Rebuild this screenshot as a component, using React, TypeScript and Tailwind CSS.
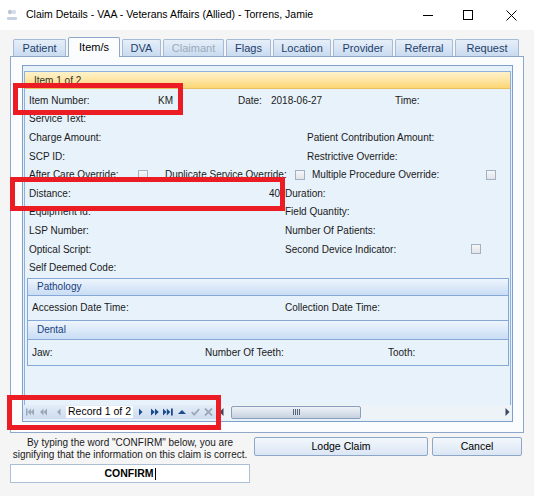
import React from 'react';

const font = { fontFamily: '"Liberation Sans", Arial, sans-serif' };

function Check() {
  return (
    <span className="inline-block w-[10px] h-[10px] shrink-0 border border-[#a3b1c2] bg-linear-to-b from-[#f6f6f6] to-[#e1e4e8]" />
  );
}

function Tab({ label, w, active, disabled }: { label: string; w: string; active?: boolean; disabled?: boolean }) {
  if (active) {
    return (
      <div className={`${w} h-[20px] -mb-px relative z-10 flex items-center justify-center border border-b-0 border-[#8fa8c9] rounded-t-[2px] bg-[#fafcfe] text-[11px] text-black`}>
        {label}
      </div>
    );
  }
  return (
    <div
      className={`${w} h-[17px] flex items-center justify-center border border-b-0 border-[#a4bad6] rounded-t-[2px] bg-linear-to-b from-[#e6eff9] to-[#c9dbf0] text-[11px] ${disabled ? 'text-[#9aa9bb]' : 'text-[#1f3e6b]'}`}
    >
      {label}
    </div>
  );
}

function Row({ children }: { children: React.ReactNode }) {
  return <div className="h-[18.6px] flex items-center pl-[4px] text-[10px] text-[#1a1a1a] whitespace-nowrap">{children}</div>;
}

function NavIcon({ d, w, on, cls }: { d: string; w: number; on?: boolean; cls?: string }) {
  return (
    <svg width={w} height="8" viewBox={`0 0 ${w} 8`} className={`shrink-0 ${cls ?? ''}`}>
      <path d={d} fill={on ? '#1d4b8f' : '#9ca8b6'} />
    </svg>
  );
}

export default function App() {
  return (
    <div className="relative w-[534px] h-[496px] bg-[#f5f5f5] overflow-hidden flex flex-col" style={font}>
      {/* Title bar */}
      <div className="h-[30px] bg-white flex items-center shrink-0">
        <svg width="12" height="14" viewBox="0 0 12 14" className="ml-[6px] mr-[8px]">
          <circle cx="4" cy="4" r="2.2" fill="#b9c7d9" />
          <circle cx="8" cy="4" r="2.2" fill="#d4dde8" />
          <rect x="1" y="9" width="10" height="3" rx="1" fill="#c6d2e2" />
        </svg>
        <span className="text-[10.5px] text-black">Claim Details - VAA - Veterans Affairs (Allied) - Torrens, Jamie</span>
        <div className="ml-auto flex items-center h-full">
          <div className="w-[40px] h-full flex items-center justify-center">
            <span className="block w-[10px] h-px bg-black" />
          </div>
          <div className="w-[40px] h-full flex items-center justify-center">
            <span className="block w-[10px] h-[10px] border border-black" />
          </div>
          <div className="w-[46px] h-full flex items-center justify-center">
            <svg width="11" height="11" viewBox="0 0 11 11">
              <path d="M0.5 0.5 L10.5 10.5 M10.5 0.5 L0.5 10.5" stroke="#000" strokeWidth="1" />
            </svg>
          </div>
        </div>
      </div>

      <div className="px-[10px] flex flex-col">
        {/* Tabs */}
        <div className="h-[26px] flex items-end gap-[2px] pl-[3px]">
          <Tab label="Patient" w="w-[53px]" />
          <Tab label="Item/s" w="w-[52px]" active />
          <Tab label="DVA" w="w-[39px]" />
          <Tab label="Claimant" w="w-[61px]" disabled />
          <Tab label="Flags" w="w-[45px]" />
          <Tab label="Location" w="w-[58px]" />
          <Tab label="Provider" w="w-[60px]" />
          <Tab label="Referral" w="w-[58px]" />
          <Tab label="Request" w="w-[64px]" />
        </div>

        {/* Tab page */}
        <div className="h-[377px] border border-[#8fa8c9] bg-[#fafcfe] pt-[8px] pl-[11px] pr-[10px] pb-[10px] flex">
          <div className="flex-1 border border-[#7f9fc8] bg-[#e8f2fb] flex flex-col">
            <div className="flex-1 pt-[5px] pl-px pr-px">
              <div className="border-l border-t border-r border-[#8fb0da] h-full flex flex-col">
                <div className="h-[17px] bg-linear-to-b from-[#fff3cc] to-[#fcd674] border-b border-[#e9c25f] flex items-center pl-[9px] text-[10px] text-[#333]">
                  Item 1 of 2
                </div>
                <div className="pt-[2px]">
                  <Row>
                    <div className="w-[144px] flex justify-between"><span>Item Number:</span><span>KM</span></div>
                    <span className="w-[65px]" />
                    <span className="w-[33px]">Date:</span>
                    <span className="w-[124px]">2018-06-27</span>
                    <span>Time:</span>
                  </Row>
                  <Row><span>Service Text:</span></Row>
                  <Row>
                    <span className="w-[278px]">Charge Amount:</span>
                    <span>Patient Contribution Amount:</span>
                  </Row>
                  <Row>
                    <span className="w-[278px]">SCP ID:</span>
                    <span>Restrictive Override:</span>
                  </Row>
                  <Row>
                    <span className="w-[109px]">After Care Override:</span>
                    <Check />
                    <span className="w-[17px]" />
                    <span className="w-[130px]">Duplicate Service Override:</span>
                    <Check />
                    <span className="w-[7px]" />
                    <span className="w-[174px]">Multiple Procedure Override:</span>
                    <Check />
                  </Row>
                  <Row>
                    <div className="w-[251px] flex justify-between"><span>Distance:</span><span>40</span></div>
                    <span className="w-[5px]" />
                    <span>Duration:</span>
                  </Row>
                  <Row>
                    <span className="w-[256px]">Equipment Id:</span>
                    <span>Field Quantity:</span>
                  </Row>
                  <Row>
                    <span className="w-[256px]">LSP Number:</span>
                    <span>Number Of Patients:</span>
                  </Row>
                  <Row>
                    <span className="w-[256px]">Optical Script:</span>
                    <span className="w-[186px]">Second Device Indicator:</span>
                    <Check />
                  </Row>
                  <Row><span>Self Deemed Code:</span></Row>
                </div>

                {/* Pathology / Dental */}
                <div className="mt-px ml-[2px] mr-px border border-[#86a8d6] text-[10px] text-[#1a1a1a]">
                  <div className="h-[17px] bg-linear-to-b from-[#eef5fd] to-[#c9ddf4] border-b border-[#86a8d6] flex items-center pl-[9px] text-[#20407f]">
                    Pathology
                  </div>
                  <div className="h-[25px] flex items-center pl-[4px] border-b border-[#86a8d6]">
                    <span className="w-[253px]">Accession Date Time:</span>
                    <span>Collection Date Time:</span>
                  </div>
                  <div className="h-[19px] bg-linear-to-b from-[#eef5fd] to-[#c9ddf4] border-b border-[#86a8d6] flex items-center pl-[9px] text-[#20407f]">
                    Dental
                  </div>
                  <div className="h-[25px] flex items-center pl-[4px]">
                    <span className="w-[173px]">Jaw:</span>
                    <span className="w-[183px]">Number Of Teeth:</span>
                    <span>Tooth:</span>
                  </div>
                </div>
              </div>
            </div>

            {/* Navigator + scrollbar */}
            <div className="h-[14px] mb-[2px] flex items-center">
              <div className="w-[193px] h-full shrink-0 bg-linear-to-b from-[#e3edf8] to-[#cddcef] flex items-center pl-[3px]">
                <NavIcon w={8} d="M0 0.5h1.5v7H0z M5 0.5 L1.8 4 L5 7.5z M8 0.5 L4.8 4 L8 7.5z" />
                <NavIcon w={7} cls="ml-[6px]" d="M3.5 0.5 L0 4 L3.5 7.5z M7 0.5 L3.5 4 L7 7.5z" />
                <NavIcon w={4} cls="ml-[10px]" d="M3.5 0.5 L0 4 L3.5 7.5z" />
                <div className="ml-[5px] h-[12px] w-[67px] shrink-0 bg-white flex items-center justify-center text-[10.5px] text-black whitespace-nowrap">
                  Record 1 of 2
                </div>
                <NavIcon w={4} on cls="ml-[6px]" d="M0 0.5 L3.5 4 L0 7.5z" />
                <NavIcon w={8} on cls="ml-[8px]" d="M0 0.5 L3.8 4 L0 7.5z M4 0.5 L7.8 4 L4 7.5z" />
                <NavIcon w={10} on cls="ml-[4px]" d="M0 0.5 L3.5 4 L0 7.5z M3.8 0.5 L7.3 4 L3.8 7.5z M8 0.5h1.8v7H8z" />
                <NavIcon w={8} on cls="ml-[5px]" d="M0 6 L4 2 L8 6z" />
                <svg width="9" height="8" viewBox="0 0 9 8" className="shrink-0 ml-[5px]">
                  <path d="M0.8 4.2 L3.2 6.6 L8.2 1.2" stroke="#9ca8b6" strokeWidth="1.8" fill="none" />
                </svg>
                <svg width="9" height="8" viewBox="0 0 9 8" className="shrink-0 ml-[4px]">
                  <path d="M1 0.5 L8 7.5 M8 0.5 L1 7.5" stroke="#9ca8b6" strokeWidth="1.8" fill="none" />
                </svg>
              </div>
              <div className="flex-1 h-full flex items-center bg-[#eef3f8]">
                <svg width="5" height="8" viewBox="0 0 5 8" className="ml-[3px] shrink-0">
                  <path d="M4.5 0 L0.5 4 L4.5 8z" fill="#3b4a5e" />
                </svg>
                <div className="ml-[7px] w-[130px] h-[13px] rounded-[2px] border border-[#8a9fbb] bg-linear-to-b from-[#eef2f7] to-[#c7d2e0] flex items-center justify-center gap-px">
                  <span className="w-px h-[6px] bg-[#55657a]" />
                  <span className="w-px h-[6px] bg-[#55657a]" />
                  <span className="w-px h-[6px] bg-[#55657a]" />
                  <span className="w-px h-[6px] bg-[#55657a]" />
                </div>
                <div className="flex-1" />
                <svg width="5" height="8" viewBox="0 0 5 8" className="mr-[2px] shrink-0">
                  <path d="M0.5 0 L4.5 4 L0.5 8z" fill="#3b4a5e" />
                </svg>
              </div>
            </div>
          </div>
        </div>

        {/* Bottom area */}
        <div className="mt-[4px] flex gap-[4px]">
          <div className="w-[240px] flex flex-col">
            <div className="text-[10px] leading-[12px] text-center text-[#1a1a1a]">
              By typing the word "CONFIRM" below, you are
              <br />
              signifying that the information on this claim is correct.
            </div>
            <div className="mt-[3px] h-[19px] border border-[#abbfd8] bg-white flex items-center justify-center text-[10.5px] font-bold text-black">
              CONFIRM<span className="inline-block w-px h-[12px] bg-black ml-px" />
            </div>
          </div>
          <button className="w-[174px] h-[19px] border border-[#8fa7c7] rounded-[2px] bg-linear-to-b from-[#f3f7fc] to-[#dbe6f4] text-[10.5px] text-black">
            Lodge Claim
          </button>
          <button className="w-[90px] h-[19px] border border-[#8fa7c7] rounded-[2px] bg-linear-to-b from-[#f3f7fc] to-[#dbe6f4] text-[10.5px] text-black">
            Cancel
          </button>
        </div>
      </div>

      {/* Red annotation boxes */}
      <div className="absolute left-[13px] top-[83px] w-[170px] h-[32px] border-[5px] border-[#ec1c24]" />
      <div className="absolute left-[10px] top-[177px] w-[275px] h-[34px] border-[5px] border-[#ec1c24]" />
      <div className="absolute left-[7px] top-[395px] w-[214px] h-[35px] border-[5px] border-[#ec1c24]" />
    </div>
  );
}
